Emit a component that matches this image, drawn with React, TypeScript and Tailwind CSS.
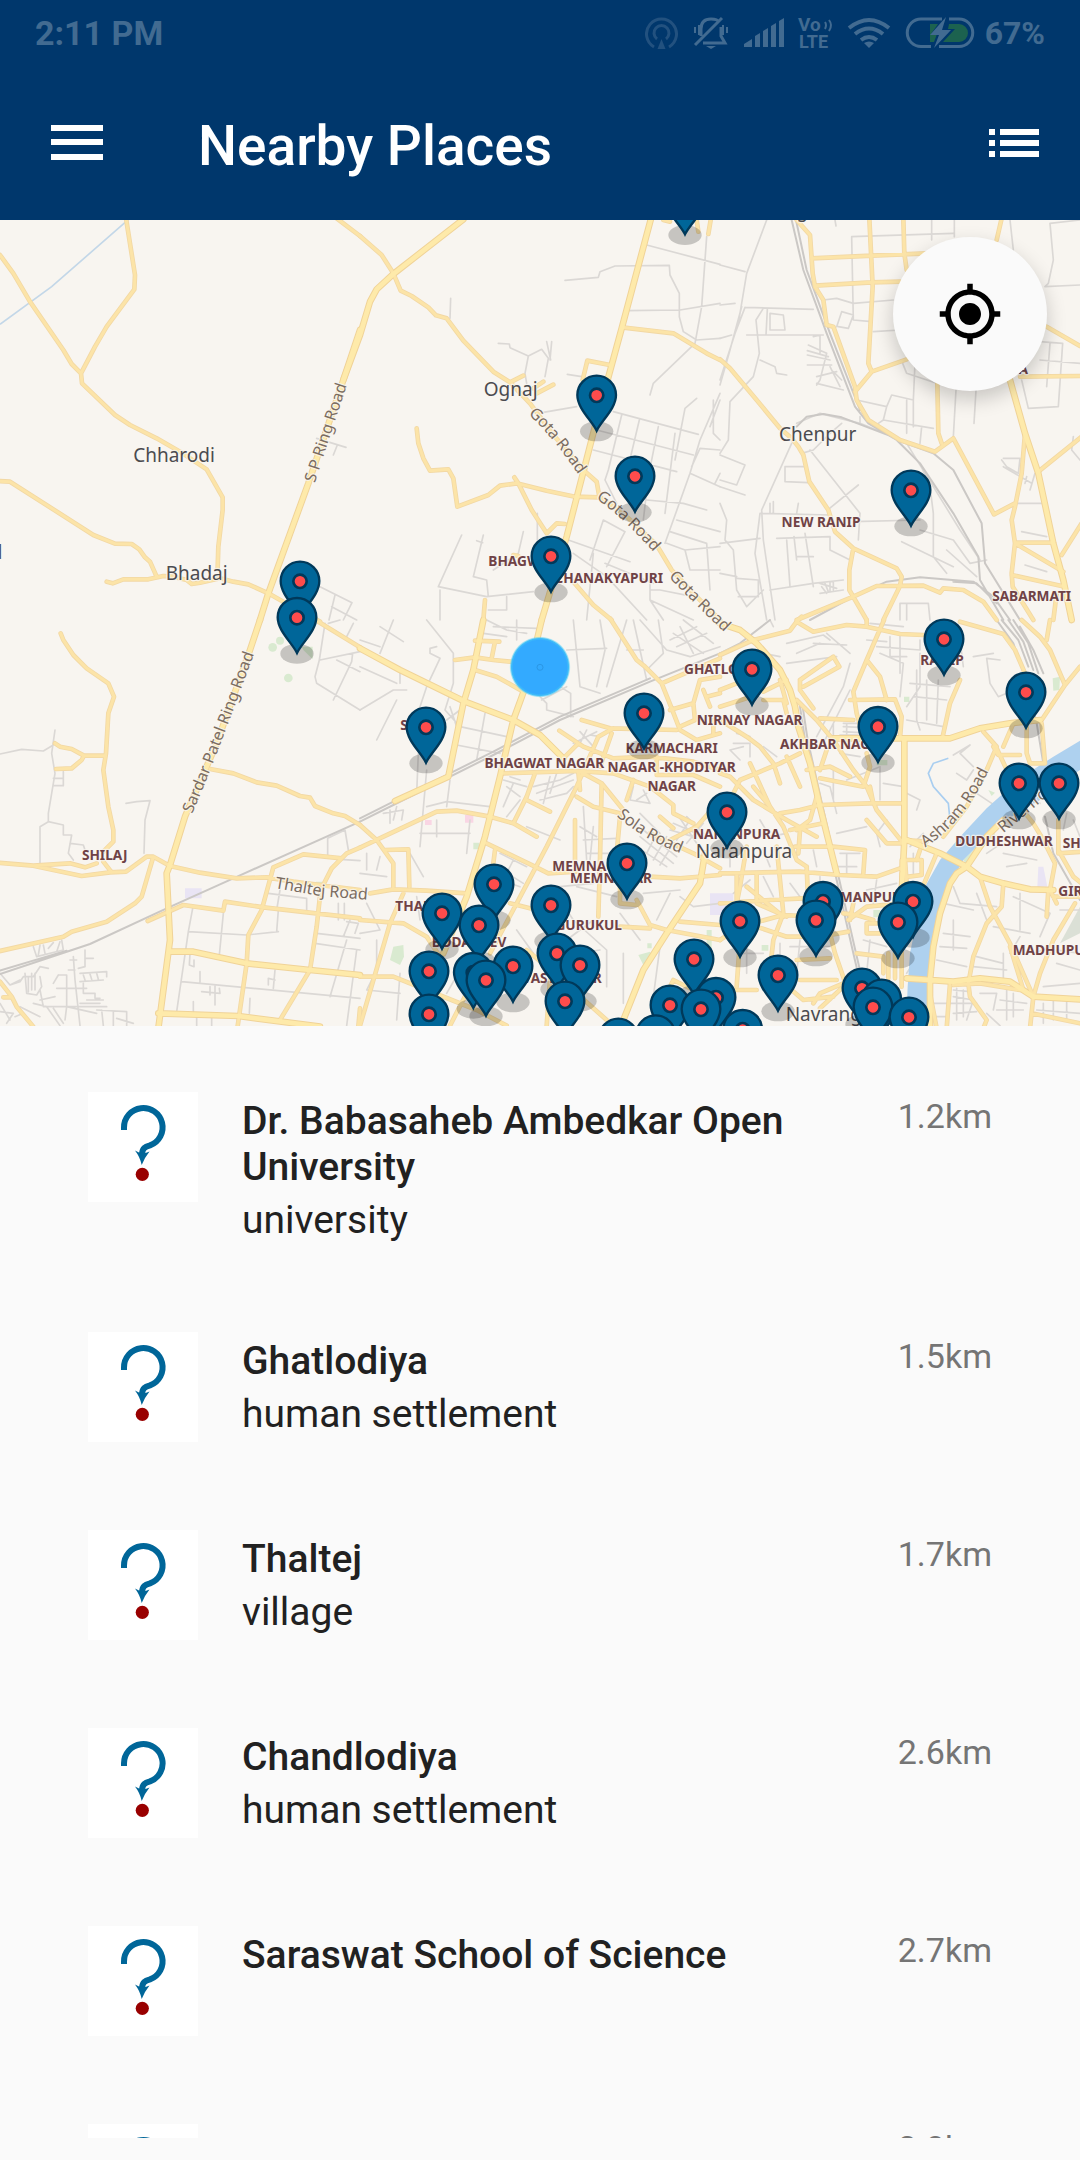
import React from 'react';
import { MdMyLocation } from 'react-icons/md';

type Place = { title: string; kind?: string; distance: string };

const places: Place[] = [
  { title: 'Dr. Babasaheb Ambedkar Open University', kind: 'university', distance: '1.2km' },
  { title: 'Ghatlodiya', kind: 'human settlement', distance: '1.5km' },
  { title: 'Thaltej', kind: 'village', distance: '1.7km' },
  { title: 'Chandlodiya', kind: 'human settlement', distance: '2.6km' },
  { title: 'Saraswat School of Science', distance: '2.7km' },
  { title: '', distance: '2.8km' },
];

/* ---------- map data: six tiles, three units to a pixel ---------- */

type Tile = { x: number; y: number; major: string; road: string; street: string; rail: string };

const tiles: Tile[] = [
  {
    x: 0,
    y: 0,
    major: 'M1080 330 1030 480 925 790 805 1120 780 1200',
    road:
      'M378 -5 405 165 403 208 320 320 285 380 243 460 246 490 345 585 390 615 470 655 540 695 620 748 668 832 668 870 655 980 653 1045M0 105 40 160 90 245 190 390 215 432 243 460M-9 783 30 785 280 945 345 971 395 972 418 988 435 1012 450 1025 470 1070M320 1085 338 1090 370 1078 445 1078 490 1068 520 1070 560 1080 575 1092 600 1088 660 1075 700 1085 745 1093 805 1120 855 1148 960 1205M1010 -5 1080 48',
    street: 'M950 655 1038 682M1012 675 1000 705M960 1100 1056 1148 1030 1200M1005 1125 987 1200M995 1160 1070 1200',
    rail: '',
  },
  {
    x: 1080,
    y: 0,
    major: 'M874 -8 785 325 710 600 620 950 545 1200M310 -2 100 162 50 208 30 245 0 345 -50 480',
    road:
      'M0 48 65 105 100 160 122 212 155 228 205 262 228 286 260 295 310 362 400 455 450 487 510 550 585 650 670 750 710 785 718 830 800 890 890 975 935 1050 1000 1120 1080 1200M785 322 940 340 1040 400 1080 420M668 480 682 422 750 435M450 487 490 467M520 505 550 485M530 520 580 494M170 625 175 670 190 715 210 752 265 748 280 775 292 860 385 825 420 797 470 790 560 812 645 830 715 832M463 772 475 790 515 870 560 940 590 910 615 912M640 1085 700 1155 755 1200M375 1140 370 1200M460 1005 475 1008M910 0 930 5M1010 0 1015 35M1052 0 1045 42',
    street:
      'M860 75 1080 133M615 181 715 172 720 155 765 138 928 136 930 165 958 220 958 290 970 335 1010 360 1080 355M1040 50 1025 260 1005 370 880 490 870 525M800 272 960 270 1080 250M272 235 270 295M415 370 448 372 450 383 505 408 545 388 565 415 555 470M505 408 495 460 500 490M560 365 572 420M575 365 570 420M622 463 665 470M550 577 650 560M760 575 1015 643M710 630 1000 705M700 690 950 755M785 585 745 750 735 780 770 850M838 600 800 760M895 620 865 770 850 900M945 640 915 880M1080 520 1020 660 990 760 915 970M1010 535 975 565 945 720M990 760 1080 800M860 840 970 850 1040 870M1080 690 1020 685 995 740M305 945 235 1100M370 945 340 1070 380 1080 385 1130M490 935 475 1000 400 1050M235 1100 380 1130 520 1115M240 1110 240 1200M440 1130 440 1170 385 1170M730 900 690 1020M730 900 795 935 740 1040M625 960 810 1025M640 1000 740 1070 860 1200M700 1000 680 1200M735 1030 880 1090M870 1070 870 1140 910 1200M930 935 1040 970 1050 1110M950 900 1080 935M975 990 1080 980M920 970 975 990 990 1050 1080 1050M870 1110 900 1110 1000 1130M870 1140 1000 1200M1080 540 1050 620M1060 540 1060 640 1080 660M1080 760 1065 790M350 962 368 968M532 880 532 960',
    rail: '',
  },
  {
    x: 2160,
    y: 0,
    major: 'M870 480 915 640 955 760 1000 970 1030 1080 1055 1200',
    road:
      'M0 418 30 445 110 540 180 625 215 655 235 680 250 705 268 785 325 870 345 935 400 985 530 1045 545 1070 540 1098 490 1200M230 0 270 45 278 160 285 200 310 240 320 315 340 320 405 500 410 540 445 600 540 660 645 695 700 655 822 883 885 850M448 -5 458 200 445 430 455 455 560 418M455 455 405 515M275 115 455 107 620 100M285 197 455 187 540 185M550 -5 553 100 560 150M845 -5 830 60M980 320 1080 378M900 470 1080 468M652 490 655 640 665 670M915 640 905 760 885 860 875 900 885 970 875 1060 878 1100 940 1200M1085 650 955 755M1085 910 1025 1005M885 968 1000 968M885 970 1030 1055M875 1065 1035 1100M230 1200 400 1130 470 1098 610 1097 660 1118 670 1105 730 1110 790 1145 830 1200M400 985 388 1050 388 1110 440 1200M1010 1120 1000 1200',
    street:
      'M140 0 80 160 55 310 0 480M0 135 75 155M75 262 280 268M75 262 45 340M128 268 108 300 118 400 100 470 30 545 25 660 0 700M142 268 138 345M80 345 310 345M150 280 190 285 195 330 150 330 150 280M0 255 45 250M0 355 35 345M65 260 30 390 0 495M395 50 700 40M395 50 400 300M635 0 635 60M703 0 703 50M310 240 350 235 400 250 520 240M400 300 455 305M460 335 540 330M265 375 320 400M262 392 325 410M262 405 330 420M262 435 335 435M280 350 300 345 300 400M290 490 370 510M290 470 350 455M320 400 300 480 290 495M330 440 360 500M340 455 365 480M120 420 165 440 170 460 200 465M350 320 365 275 400 285 385 325 355 320M410 540 500 560 515 525 580 540 580 620M500 560 490 600 475 610M560 540 560 640M490 600 640 625M605 620 600 670M708 510 700 650M768 510 762 610M548 430 560 460 650 490M585 430 580 540M905 480 925 565 1015 560 1028 370 960 365M990 370 980 500M960 420 1080 430M870 0 880 90M1080 0 990 10 1000 120 985 190 975 200 1080 195M345 0 348 18M230 610 300 580 420 610 520 650M215 670 125 870 130 960 165 1200M120 880 105 1000 140 1200M420 610 420 590M420 880 270 690M365 610 330 640 280 690 245 700M325 868 415 795M0 705 75 735 50 795 0 780M0 800 75 825M195 740 260 740M265 788 195 785 195 740M120 880 330 885M150 850 150 880M160 845 160 880M235 850 230 880M420 880 415 960M400 905 600 900M170 955 330 950M0 970 120 955M0 850 20 900 15 960 40 990 50 1110 80 1160M255 940 280 1100M222 950 230 1020M200 960 210 1100M330 950 330 990 390 1020M0 1060 50 1070M50 1075 115 1080 115 1130 55 1130M230 1010 280 1010M150 1110 280 1090 370 1080M80 1160 130 1110M545 965 700 1040M600 930 700 960 750 1030 800 1020M640 880 640 1010 680 1060M560 670 640 800 720 930 780 1020M600 730 630 800 640 880M680 990 770 1070M850 715 900 715 895 760 860 740 845 720M850 740 935 790M920 770 915 790M945 760 930 810M1060 650 1055 690 1080 720M885 850 970 850M905 935 980 950M915 1035 980 1055M540 1150 625 1150 630 1200M540 1150 540 1200M560 1150 560 1200M300 1090 350 1105M305 1100 320 1120M315 1090 325 1115M330 1085 330 1115M340 1085 340 1110M300 1120 370 1110',
    rail: 'M215 0 250 150 320 340 405 560 445 610 530 660 640 700 700 750 785 910 795 1030M228 0 260 150 330 340 420 570M270 1200 400 1130 500 1085 600 1072 760 1085 820 1130 870 1200M530 660 600 730 700 880 775 1010 780 1080 850 1200M795 1030 900 1200M700 1085 770 1090 830 1150M230 620 260 590 310 582 365 592 530 655',
  },
  {
    x: 0,
    y: 1200,
    major: 'M780 0 750 90 650 370 555 590 510 735 500 760 510 960 475 1225M510 995 580 995 740 1030 930 1050 1080 1065M475 1180 715 1188 960 1220',
    road:
      'M182 40 190 60 220 105 260 145 325 190 342 230 325 280 318 400 310 450 325 560 340 630 340 665 310 695M165 370 180 380 215 387 252 407 315 407M252 407 245 420 215 445 168 447M-9 728 100 737 210 730 255 742 290 730M100 737 245 768 330 757 378 755 440 710 460 710 510 738 600 758 710 775 800 772 880 785 1080 810M310 725 335 757M460 710 425 830 405 850 320 905 215 935 190 950 -9 995M630 447 700 460 770 487 830 497 900 528 930 533 945 558 1000 580 1035 588 1080 615M443 903 550 855 670 872 675 845 790 862 1080 895M1080 683 1040 700 995 745 962 810 950 920 930 1050 840 1200M1025 715 910 703 820 742 785 870 745 945 740 1030 712 1225M955 5 1080 82M0 1085 35 1130 50 1160 100 1220M10 1132 35 1132M1080 1165 1075 1220',
    street:
      'M165 330 155 400 165 460 155 520 145 580 145 605 120 620 120 730M0 402 65 388 130 393 160 375M145 605 190 615 190 645 215 645 205 700 220 720M210 670 250 675 255 690M378 550 410 545 450 542 435 600 432 700M160 475 190 475 190 455M160 497 190 497 190 475M983 710 983 655 1035 630 1045 690M958 120 945 170 950 190 1080 270M960 120 1080 95M1058 100 1055 125 1000 240M975 10 958 120M1010 120 1080 155M1020 0 985 10M1060 10 1040 50M578 865 565 935 530 1175M565 935 740 945 835 935M670 880 658 1005M835 870 830 935M840 810 830 870M805 820 920 835 920 870M1020 718 1080 722M545 1085 1080 1135M950 940 1080 955M945 970 1080 990M1050 900 1030 950M1015 850 1015 900M1033 850 1033 900M1040 905 1075 910 1065 940M1040 960 990 1130M1070 990 1040 1217M600 1055 600 1085M645 1095 645 1155M630 1100 630 1125M605 1115 660 1120 658 1105M825 1050 820 1105M805 1095 805 1075 825 1080M570 1000 568 1035 582 1040 582 1020M750 1135 748 1180M580 1145 580 1180M590 1190 590 1217M635 1190 635 1217M100 980 110 1010 190 990 185 960M120 975 115 1005M130 975 135 1000M145 985 160 968M170 995 180 965M0 1060 30 1095 60 1085 70 1070 100 1070 120 1040 145 1045M30 1095 60 1080M75 1060 80 1120 110 1125 125 1100 120 1070M85 1070 85 1115M95 1060 95 1110M105 1060 105 1110M170 1105 260 1105M175 1065 200 1065 200 1160 290 1180M160 1090 175 1065M205 1050 225 1050M210 1020 230 1020M220 1010 225 1080 240 1217M240 1060 320 1055 320 1070M240 1085 310 1080M250 1065 255 1080M270 1062 275 1078M290 1060 295 1078M255 990 255 1040 235 1045M255 1015 280 1015M250 1090 250 1120 285 1120 285 1135 300 1135M240 1150 300 1150M260 1140 310 1140M290 1170 380 1175 380 1217M305 1170 310 1217M340 1175 340 1217M350 1195 400 1210M100 1150 140 1160 180 1217M120 1110 130 1160 320 1160M120 1140 165 1130M60 1160 120 1190M0 1150 30 1200M0 1175 40 1180 20 1210M45 1190 70 1180M160 1165 190 1210M200 1160 195 1200',
    rail: 'M0 1062 270 972 500 865 700 775 1080 605M0 1052 200 992',
  },
  {
    x: 1080,
    y: 1200,
    major:
      'M545 0 500 190 460 300 420 470 375 650 320 830 250 1000M370 0 340 150 310 250 265 470 105 543M0 85 120 150 315 245 460 300 540 345 610 415M1035 700 1020 790 920 940 850 1050 780 1225',
    road:
      'M285 120 345 112 400 120 470 127M345 62 418 65M405 65 395 115M345 150 410 170 490 215M750 -5 830 120 855 140 905 190 935 265 960 330 1010 360 1080 340M905 190 1080 115M665 300 750 325 950 330M598 332 670 380 760 415 870 410 1000 425 1080 450M610 415 655 370M430 460 650 453 760 460M760 325 715 350 650 500 560 680 470 850 390 1000M525 460 500 530 460 610M500 540 570 575M0 683 230 575 290 572 390 590 460 610 530 650M375 668 525 740 565 760 650 755M655 455 660 510M650 530 700 560 780 580M725 490 720 720 715 890M755 340 720 440M660 455 725 490 790 570M820 480 800 540M760 460 870 500 940 555 940 580 1000 610M645 600 645 720M780 590 770 700M900 590 940 625M1080 540 1010 620 930 660M870 640 1000 700 1080 745M870 770 960 775 1080 765M830 840 870 915 920 930 1080 960M780 920 870 925M780 800 780 850 830 855M0 615 50 660 100 730 100 800M75 690 145 688 148 800M30 820 100 808 200 812 320 820M405 690 400 730M130 820 90 910 0 1217M0 900 130 910 200 950 240 1010M0 1070 100 1070 200 1110 350 1170 440 1217M270 1217 330 1100M450 850 510 865M560 1217 570 1080M500 990 560 1040 740 1200M890 460 890 410M890 465 1000 465 1080 500M930 270 1000 250 1020 180 1080 170M960 320 1005 300 1000 250M1030 210 1050 260M900 1160 940 1080 1000 1110M960 905 1080 915M1040 230 1080 220M1060 340 1060 300',
    street:
      'M100 0 60 100M60 20 130 65M0 60 60 80M230 80 210 85 210 100 240 115 200 200 160 320M0 140 110 190M120 150 120 190M0 270 100 210 140 210M200 0 280 100 280 190 255 270M110 240 50 360M375 280 350 420M300 320 440 350M290 375 420 400M200 450 180 680M175 400 170 520M380 0 440 30 500 40M400 20 530 25M470 0 470 60M370 40 440 50M640 0 660 200 720 220M720 0 735 90 710 200M800 0 740 200M620 90 740 85M800 90 850 90M820 0 860 180M895 0 910 100 860 150M840 0 920 90 990 110 1080 80M600 200 632 220 632 290M540 230 560 250 560 270 640 290M545 240 620 200M960 20 1000 100M940 40 1030 100M930 60 1010 20M950 80 1040 40M970 0 1060 70M430 480 500 500M440 500 480 530M430 560 460 490M450 470 480 480M570 470 550 550M590 460 570 520M520 500 600 480 640 460M530 520 640 480M540 540 620 520 640 500M480 540 440 590M70 580 130 570 125 600M110 560 100 600M90 570 90 610M200 560 260 545 390 560M270 480 260 560M420 700 500 740M410 740 490 790M420 780 480 800M440 760 420 830M460 720 440 760M500 620 600 660M660 620 710 650M670 660 770 655M680 700 760 700M670 560 680 720M700 620 690 720M840 650 940 730M850 630 950 710M830 680 920 740M860 700 890 640M880 720 920 650M900 735 940 670M820 500 810 540 870 550 850 510M830 540 860 520M840 580 900 640M930 630 1000 650M940 610 1020 645M960 595 1010 670M980 590 1030 640M950 660 990 600M980 670 1030 610M660 335 700 380M680 330 660 370M690 345 720 350M670 355 710 335M640 370 680 350M255 270 300 320M260 300 300 270M270 260 290 320M150 700 190 770M0 760 80 770M20 700 20 750M60 710 50 750M20 850 60 930 0 940M170 830 180 900M50 960 50 1050 20 1110M20 1110 120 1120M120 1060 110 1200M640 900 740 990 740 1100M780 880 840 960M650 1000 720 990M790 1000 790 1150M900 980 880 1130M620 960 700 900M470 930 520 1000M260 1120 300 1050M960 830 1000 860 1080 850M850 820 960 810M650 800 770 830M600 800 700 790M600 840 640 900M930 820 890 900M180 640 330 640M330 600 320 700M230 600 230 650',
    rail: 'M0 605 130 540 400 405 600 300 870 185 1080 100M0 595 130 530 400 395 600 290 870 175',
  },
  {
    x: 2160,
    y: 1200,
    major:
      'M0 10 60 30 110 70 180 150 210 210 225 260 235 320 270 430 300 560 330 680 350 760M340 355 500 355 690 355 780 325 870 310 960 300M560 660 660 700 740 740 780 770 850 790 930 808 1000 810M850 600 800 650 740 740 710 760 690 790 660 880 640 980 630 1080 630 1225M553 355 553 660 545 820M560 1075 700 1085 780 1075 870 1085 940 1130 1080 1138',
    road:
      'M0 105 100 60 210 32 230 5 280 35 380 15 440 20 540 42 610 45M440 0 440 20M492 0 440 120 400 215 410 280 430 350M230 5 245 -10M720 5 850 42 885 90 915 160M905 0 960 50 990 90 1035 195 1080 140M990 0 980 60M1035 195 965 300M720 180 690 250 668 350M300 295 400 300M440 120 480 170 500 240M390 240 525 238 545 290 540 355M230 240 290 300 340 360 400 450 440 500 470 570 550 670M240 180 340 110 358 140 250 200M240 180 240 210 280 265M130 215 200 180M0 260 110 225M0 210 50 190M130 240 190 240 200 280M180 180 200 250M0 300 80 350 120 380 160 430 180 490M0 600 60 480 180 430 240 400M0 460 30 470 100 540 200 600 290 650M260 450 330 440 390 470M300 475 430 500 450 440 440 400M300 450 320 390M180 580 240 570 300 555 450 550 553 550M100 500 150 560 190 620 230 720 260 740M210 630 310 610M225 680 340 680 435 690 430 760M90 430 150 560M200 410 240 500M290 530 270 600 230 630M240 630 235 700M450 500 460 550M440 600 500 670 550 670M0 760 240 755 360 765 470 770 540 745M170 680 190 880 160 960 150 1050 150 1100M80 680 60 800 40 900M110 760 110 850 200 890M260 740 265 860 300 920M0 850 150 840 250 835M80 800 190 890M50 760 50 850M110 920 200 950 300 950 385 935M0 960 60 920 190 885 280 890M320 900 345 1000 380 1100M230 1020 330 1015M240 1080 350 1080M180 1080 250 1140 340 1130M0 1110 110 1110M280 1150 300 1120 370 1090M300 1165 370 1100M60 960 50 1100M555 720 560 790M555 720 605 720 605 765 565 770M555 660 620 665M600 690 590 720M545 820 545 760M385 900 440 860 545 850M440 910 530 910M440 910 440 940 480 940M390 900 400 850M545 720 545 750M820 380 835 405 900 405M790 335 830 380 800 450 740 560 670 650M830 385 870 470 900 560 940 610 970 660 1005 730 990 810 1010 850M920 310 920 400 930 430 970 430M965 310 975 430M850 380 880 310M780 770 810 860 870 970 940 1130M850 790 845 860 800 910 760 1010 745 1090M1065 850 1000 960 960 1060 940 1130 930 1225M985 810 980 890M700 1095 780 1090 900 1110M745 1090 750 1130 800 1200 790 1225M870 980 910 1110M690 1090 680 1225M935 1180 1080 1210M1015 690 1060 770 1085 790M1015 600 1015 700M1000 830 1085 830M505 1000 505 1075M525 1000 525 1075M545 990 545 1100M490 1010 490 1060M410 1000 490 1010M370 880 410 885 460 900M650 700 600 820M1015 700 1085 695M630 1120 650 1225',
    street:
      'M150 0 160 20M200 70 310 45 330 60M280 70 380 75M320 40 390 100M450 10 550 20M510 50 510 110 560 110M470 80 600 90 600 60M540 40 540 160M440 60 500 65M480 100 550 130 540 230M600 100 600 200 560 260M720 60 730 140M840 120 800 115 810 190 835 230 860 220M760 110 820 100M570 190 690 200M580 230 680 240M590 150 590 300 600 330M620 180 620 300M655 180 650 310M560 300 670 320M290 350 370 200 390 130M310 370 390 210M230 100 300 70M200 130 350 110M130 100 180 110M60 110 100 100M340 310 340 350M380 310 380 350M370 310 420 310M370 320 420 322M370 335 420 338M360 345 415 345M40 370 90 370 90 410M50 340 90 350M70 380 30 390 60 420M130 380 170 410M700 405 750 375 720 400 760 440M710 460 740 480 760 450M830 560 770 520M900 530 960 550M340 440 340 540M380 480 480 440 480 540M360 400 420 410M560 520 600 540 590 570M490 490 550 500M550 430 550 450M300 490 330 500 350 580M500 600 470 640 480 680M350 640 440 620M360 700 420 700M380 700 380 760M350 740 410 740M120 600 150 650 200 640M30 650 30 740M130 690 150 740M280 690 290 740M300 770 300 830M90 780 40 820M130 770 160 830M210 790 240 830M440 810 530 790M470 780 460 850M300 860 380 880M210 980 330 980M240 960 230 1060M60 1000 130 1000M80 970 80 1060M180 970 180 1030M430 960 500 980M450 960 440 1060M600 1000 560 1060M580 700 580 760M610 640 570 680M670 850 760 870M700 900 700 990M670 940 750 950M660 980 740 985M650 1020 740 1040M700 800 720 850 830 860M820 920 930 940M880 830 990 880 960 950M900 820 900 930M770 820 800 900M900 950 870 1000M940 1000 1000 980M1010 990 1080 1000M1010 1030 1080 1050M970 1100 1080 1090M770 1010 850 1030M760 1040 860 1050M850 1000 850 1080M700 1110 750 1115M700 1130 760 1140 740 1200M710 1105 710 1200M730 1110 730 1190M690 1150 770 1150M700 1180 770 1175M780 1120 830 1120 820 1170M860 1110 860 1200M880 1120 880 1190M840 1140 920 1150M830 1170 910 1170M800 1180 840 1217M970 1150 970 1210M1000 1140 1000 1200M1040 1140 1040 1200M950 1170 1080 1180M1060 600 1080 650M1040 580 1030 630M850 700 950 720M860 740 920 730M800 700 830 680M1020 870 1080 870M640 1150 690 1150M640 1190 680 1190',
    rail:
      'M240 260 255 360 300 560 350 780 400 1000 420 1085M248 260 263 360 308 560 358 780 408 1000 428 1085M830 0 880 70 915 170 950 310 970 430M845 0 895 60 925 140M865 0 910 65 940 150M880 0 925 70 955 160M900 20 940 90 970 160M150 0 60 70 0 100M975 590 1000 700 1080 840',
  },
];

const pins: [number, number][] = (
  [
    [900, 1084], [891, 1193], [2055, -63], [1790, 526], [1905, 769], [1653, 1009], [2733, 811],
    [1278, 1522], [1932, 1480], [1881, 1930], [1482, 1993], [1326, 2080], [1437, 2116], [1653, 2056],
    [1287, 2254], [1287, 2383], [1420, 2258], [1458, 2281], [1539, 2239], [1671, 2200], [1740, 2236],
    [1695, 2344], [2082, 2218], [2010, 2356], [2103, 2368], [2148, 2333], [1855, 2455], [1967, 2445],
    [2256, 1348], [2832, 1258], [2634, 1520], [3078, 1417], [3057, 1690], [3177, 1690], [2181, 1777],
    [2469, 2045], [2448, 2101], [2739, 2045], [2694, 2107], [2220, 2104], [2334, 2266], [2586, 2305],
    [2645, 2338], [2619, 2362], [2727, 2392], [2228, 2429],
  ] as [number, number][]
).sort((a, b) => a[1] - b[1]);

type Label = [string, number, number, ('start' | 'middle' | 'end')?];

const towns: Label[] = [
  ['Chharodi', 522, 726], ['Bhadaj', 590, 1080], ['Ognaj', 1532, 528], ['Chenpur', 2453, 663],
  ['Naranpura', 2232, 1915], ['Navrangpura', 2357, 2404, 'start'], ['d', 7, 1018, 'end'], ['g', 2407, -8],
];

const suburbs: Label[] = [
  ['BHAGW', 1465, 1038, 'start'], ['CHANAKYAPURI', 1989, 1088, 'end'], ['NEW RANIP', 2463, 920],
  ['CHANDKHEDA', 3084, 462, 'end'], ['SABARMATI', 3095, 1144], ['SOLA', 1201, 1529, 'start'],
  ['BHAGWAT NAGAR', 1633, 1644], ['KARMACHARI', 2015, 1600], ['NAGAR -KHODIYAR', 2015, 1656],
  ['NAGAR', 2015, 1713], ['GHATLODIA', 2052, 1363, 'start'], ['NIRNAY NAGAR', 2249, 1515],
  ['NARANPURA', 2210, 1856], ['MEMNAGAR', 1657, 1953, 'start'], ['MEMNAGAR', 1833, 1988],
  ['THALTEJ', 1186, 2074, 'start'], ['GURUKUL', 1866, 2130, 'end'], ['BODAKDEV', 1407, 2182],
  ['VASTRAPUR', 1805, 2290, 'end'], ['RANIP', 2826, 1335], ['AKHBAR NAGAR', 2340, 1586, 'start'],
  ['DUDHESHWAR', 3012, 1878], ['SHAHIBAG', 3188, 1883, 'start'], ['GIRDHARNAGAR', 3175, 2027, 'start'],
  ['MADHUPURA', 3038, 2205, 'start'], ['USMANPURA', 2466, 2045, 'start'], ['SHILAJ', 314, 1920],
];

const roadNames: [string, string][] = [
  ['S P Ring Road', 'M944 790 1060 435'],
  ['Gota Road', 'M1585 582Q1668 660 1760 800'],
  ['Gota Road', 'M1788 836Q1870 890 1990 1030'],
  ['Gota Road', 'M2006 1070Q2080 1150 2200 1262'],
  ['Sardar Patel Ring Road', 'M576 1782Q648 1620 795 1210'],
  ['Thaltej Road', 'M824 2004 960 2028 1180 2046'],
  ['Sola Road', 'M1850 1788Q1940 1870 2100 1920'],
  ['Ashram Road', 'M2776 1882Q2920 1790 2995 1580'],
  ['Riverfront', 'M3010 1840 3190 1690'],
];

function Pin({ x, y }: { x: number; y: number }) {
  return (
    <g transform={`translate(${x} ${y})`}>
      <ellipse cy="108" rx="50" ry="30" fill="#000" fillOpacity="0.2" />
      <path
        d="M0 106C-14 76 -58 40 -58 -1A58 58 0 0 1 58 -1C58 40 14 76 0 106Z"
        fill="#006699"
        stroke="#00395a"
        strokeWidth="7"
      />
      <circle r="20" fill="#ff4c4c" stroke="#00395a" strokeWidth="8" />
    </g>
  );
}

function layer(key: keyof Tile, stroke: string, width: number) {
  return (
    <g fill="none" stroke={stroke} strokeWidth={width} strokeLinejoin="round" strokeLinecap="round">
      {tiles.map((t, i) => (
        <path key={i} transform={`translate(${t.x} ${t.y})`} d={String(t[key])} />
      ))}
    </g>
  );
}

function MapDrawing() {
  return (
    <svg
      viewBox="0 0 3240 2418"
      preserveAspectRatio="xMidYMid slice"
      className="block size-full bg-[#f8f5f0]"
      role="img"
      aria-label="Map of nearby places"
    >
      <defs>
        <radialGradient id="here">
          <stop offset="0.88" stopColor="#33aaff" />
          <stop offset="0.94" stopColor="#3fbdf8" />
          <stop offset="1" stopColor="#5fd6f6" stopOpacity="0.2" />
        </radialGradient>
        {roadNames.map(([, d], i) => (
          <path key={i} id={`road-${i}`} d={d} />
        ))}
      </defs>
      <g fill="#d9ead0">
        <circle cx="818" cy="1282" r="13" />
        <circle cx="840" cy="1262" r="12" />
        <circle cx="865" cy="1374" r="13" />
        <path d="M905 1280H938V1318L910 1290ZM1180 2180 1210 2175 1212 2210 1200 2235 1170 2220ZM1915 2205 1950 2195 1960 2215 1930 2235ZM1942 2170H1955V2185H1942ZM1420 1868H1438V1888H1420ZM3158 1375 3180 1370 3178 1410 3160 1412ZM2712 1430H2728V1446H2712ZM2965 1710 2985 1718 2975 1728ZM2620 2070H2640V2092H2620ZM2285 2175H2305V2192H2285ZM948 1985H966V2000H948ZM2890 1920 2980 1830 2985 1845 2900 1935ZM2120 2130H2135V2200H2120ZM2630 1620H2662V1636H2630Z" />
      </g>
      <path d="M3240 2060 3180 2170 3240 2140Z" fill="#dbe0d6" />
      <path d="M555 2005H605V2035H555ZM2130 2020H2200V2085H2130ZM3115 1940H3130L3142 2000H3112Z" fill="#e9e4f4" />
      <path d="M1395 1785H1420V1808H1395ZM1275 1800H1295V1815H1275Z" fill="#f9d6e4" />
      <g fill="none" stroke="#c3d7e8" strokeWidth="5">
        <path d="M0 313 155 200 395 -10" />
        <path d="M2845 1615 2800 1630 2785 1660 2800 1700 2845 1750 2850 1800" stroke="#a9cef0" />
      </g>
      {layer('street', '#dbd8d5', 5)}
      {layer('rail', '#cbc8c5', 6)}
      <path
        d="M3240 1562 3160 1610 3060 1675 2960 1765 2890 1840 2820 1920 2775 2000 2750 2100 2730 2200 2723 2300 2718 2420 2785 2420 2790 2280 2800 2200 2815 2100 2850 1990 2890 1920 2960 1850 3010 1805 3120 1740 3180 1690 3240 1650Z"
        fill="#aed1ef"
      />
      {layer('road', '#f2d8a4', 14)}
      {layer('major', '#f0d398', 20)}
      {layer('road', '#fce4a8', 9)}
      {layer('major', '#feeaaa', 14)}
      <g fontFamily="'Noto Sans', sans-serif" stroke="#f8f5f0" strokeOpacity="0.8" strokeWidth="7" strokeLinejoin="round" paintOrder="stroke">
        <g fontSize="48" fill="#7b6c60">
          {roadNames.map(([name], i) => (
            <text key={i}>
              <textPath href={`#road-${i}`}>{name}</textPath>
            </text>
          ))}
        </g>
        <g fontSize="41" fontWeight="700" fill="#6f4246">
          {suburbs.map(([name, x, y, anchor = 'middle'], i) => (
            <text key={i} x={x} y={y} textAnchor={anchor}>
              {name}
            </text>
          ))}
        </g>
        <g fontSize="57" fill="#4b4b4f">
          {towns.map(([name, x, y, anchor = 'middle'], i) => (
            <text key={i} x={x} y={y} textAnchor={anchor}>
              {name}
            </text>
          ))}
        </g>
      </g>
      {pins.map(([x, y], i) => (
        <Pin key={i} x={x} y={y} />
      ))}
      <circle cx="1620" cy="1341" r="91" fill="url(#here)" />
      <circle cx="1620" cy="1342" r="9" fill="none" stroke="#2a97e6" strokeWidth="3" />
    </svg>
  );
}

/* ---------- status bar ---------- */

function StatusIcons() {
  return (
    <svg viewBox="646 16 330 34" className="h-[34px] w-[330px]" fill="none" stroke="#426b91" strokeWidth="3" aria-hidden="true">
      <g stroke="#22517f">
        <path d="M655 47A15 15 0 1 1 670 47" />
        <path d="M658 39A7.500 7.500 0 1 1 667 39" />
        <path d="M662.500 39 658.500 49H666.500Z" fill="#22517f" stroke="none" />
      </g>
      <path d="M702 36V29C702 22 706 19 712 19C716 19 719 20 720 22M722 27V36L726 43H704M696 45 723 18" />
      <path d="M707 46H717L712 49Z" fill="#426b91" stroke="none" />
      <path d="M696 27V33M700 25V35M724 25V35M728 27V33" strokeWidth="2" />
      <g fill="#426b91" stroke="none">
        <path d="M745 47V44L753 39V47ZM756 47V36L761 33V47ZM764 47V31L769 28V47ZM772 47V26L777 23V47ZM780 47V21L785 18V47Z" />
        <text x="799" y="31" fontSize="19" fontWeight="700" fontFamily="Roboto, sans-serif">
          Vo
        </text>
        <text x="800" y="48" fontSize="18" fontWeight="700" fontFamily="Roboto, sans-serif">
          LTE
        </text>
      </g>
      <path d="M826 22Q828 25 826 29M830 20Q834 25 830 31" strokeWidth="2" />
      <path d="M850 28Q870 12 890 28M856 34Q870 23 884 34M862 40Q870 34 878 40" strokeWidth="4" />
      <path d="M865 43Q870 40 875 43L870 48Z" fill="#426b91" stroke="none" />
      <path d="M943 19H922A13.500 13.500 0 0 0 922 46.500H932M950 19H960A13.500 13.500 0 0 1 960 46.500H940" />
      <path d="M931 24H939L932 34H938L935 42H931ZM950 24H960A9 9 0 0 1 960 42H944L956 29H949Z" fill="#1c624f" stroke="none" />
      <path d="M947 17 931 35H940L935 48L952 30H943Z" fill="#426b91" stroke="none" />
    </svg>
  );
}

function MenuIcon() {
  return (
    <svg viewBox="0 0 52 36" className="h-9 w-[52px]" fill="#fff" aria-hidden="true">
      <path d="M0 0H52V6H0ZM0 14H52V20H0ZM0 29H52V35H0Z" />
    </svg>
  );
}

function ListIcon() {
  return (
    <svg viewBox="0 0 50 28" className="h-7 w-[50px]" fill="#fff" aria-hidden="true">
      <path d="M0 0H6V6H0ZM11 0H50V6H11ZM0 11H6V17H0ZM11 11H50V17H11ZM0 22H6V28H0ZM11 22H50V28H11Z" />
    </svg>
  );
}

function PlaceIcon() {
  return (
    <svg viewBox="0 0 110 110" className="size-[110px] shrink-0 bg-white" aria-hidden="true">
      <path d="M36 38V35.500A19.300 19.300 0 1 1 62 53.400C57 55 54.500 56 54 62" fill="none" stroke="#006699" strokeWidth="6" />
      <path d="M47 58.500Q54 63 61.500 59.500Q57 65 53.700 73Q52 65 47 58.500Z" fill="#006699" />
      <circle cx="54.300" cy="82.300" r="6.600" fill="#990000" />
    </svg>
  );
}

function PlaceRow({ place }: { place: Place }) {
  return (
    <li className="flex items-start">
      <PlaceIcon />
      <div className="ml-11 flex min-w-0 flex-1 flex-col gap-[7px] pt-1.5 pb-px text-[39px] leading-[46px] text-[#212121]">
        {place.title && <h2 className="font-medium">{place.title}</h2>}
        {place.kind && <p className="font-normal">{place.kind}</p>}
      </div>
      <span className="ml-11 pt-1 text-[34px] leading-[40px] text-[#757575]">{place.distance}</span>
    </li>
  );
}

export default function App() {
  return (
    <div className="flex h-screen flex-col overflow-hidden bg-[#fafafa] font-['Roboto',sans-serif]">
      <header className="shrink-0 bg-[#00376c] text-white">
        <div className="flex h-[66px] items-center justify-between px-[35px] leading-10 font-bold text-[#426b91]">
          <span className="text-[34px]">2:11 PM</span>
          <div className="flex items-center gap-2.5">
            <StatusIcons />
            <span className="text-[32px]">67%</span>
          </div>
        </div>
        <div className="flex h-[154px] items-center pr-[41px] pl-[51px]">
          <button type="button" aria-label="Open menu">
            <MenuIcon />
          </button>
          <h1 className="ml-[95px] flex-1 pt-1.5 text-[55px] leading-[64px] font-medium">Nearby Places</h1>
          <button type="button" aria-label="Show as list">
            <ListIcon />
          </button>
        </div>
      </header>

      <section className="relative h-[806px] shrink-0 overflow-hidden">
        <MapDrawing />
        <button
          type="button"
          aria-label="My location"
          className="absolute top-[17px] right-[33px] flex size-[154px] items-center justify-center rounded-full bg-[#fafafa] text-black shadow-[0_8px_20px_rgba(0,0,0,0.2)]"
        >
          <MdMyLocation size={66} />
        </button>
      </section>

      <ul className="mb-[22px] flex min-h-0 flex-1 flex-col gap-[88px] overflow-y-auto px-[88px] pt-[66px] [scrollbar-width:none]">
        {places.map((place, i) => (
          <PlaceRow key={i} place={place} />
        ))}
      </ul>
    </div>
  );
}
